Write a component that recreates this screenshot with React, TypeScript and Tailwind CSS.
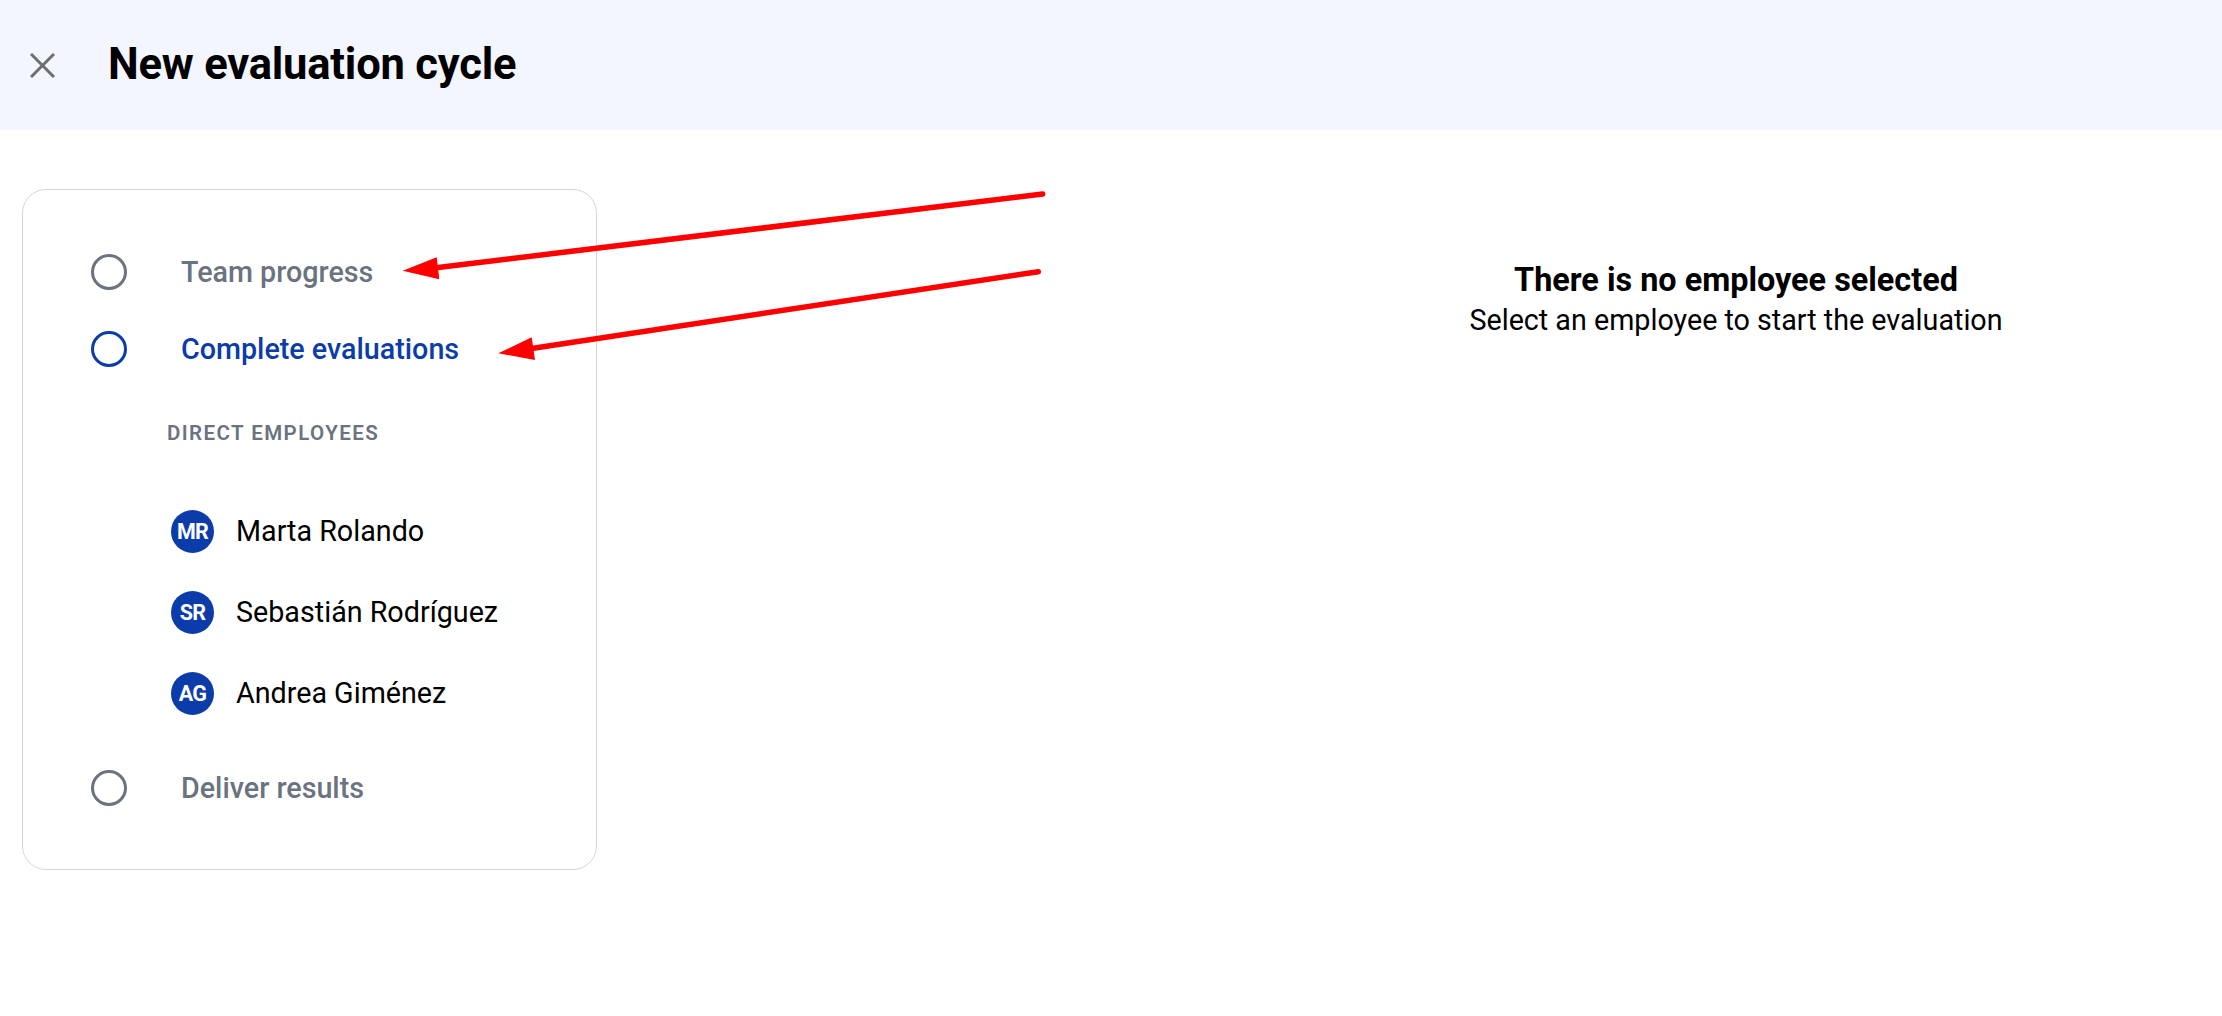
import React from 'react';

type Step = { id: string; label: string; active?: boolean };

const EMPLOYEES = [
  { initials: 'MR', name: 'Marta Rolando' },
  { initials: 'SR', name: 'Sebastián Rodríguez' },
  { initials: 'AG', name: 'Andrea Giménez' },
];

function StepRow({ step }: { step: Step }) {
  const color = step.active ? 'text-[#0b3caa] border-[#0b3caa]' : 'text-[#6b7280] border-[#6b7280]';
  return (
    <div className={`flex items-center h-[36px] gap-[54px] ${color}`}>
      <span className="w-[36px] h-[36px] rounded-full border-[3px] border-current shrink-0" />
      <span className="text-[28.7px] font-medium leading-none">{step.label}</span>
    </div>
  );
}

function Avatar({ initials }: { initials: string }) {
  return (
    <div className="w-[43px] h-[43px] rounded-full bg-[#0b3caa] flex items-center justify-center shrink-0">
      <span className="text-white text-[21.5px] font-bold leading-none tracking-[-0.8px]">{initials}</span>
    </div>
  );
}

export default function App() {
  return (
    <div className="relative min-h-[1016px] w-full bg-white font-['Roboto',sans-serif] text-black">
      {/* Header */}
      <header className="h-[130px] bg-[#f3f6fe] flex items-center pl-[30px] gap-[53px]">
        <button aria-label="Close" className="w-[25px] h-[25px] flex items-center justify-center text-[#6e6e6e]">
          <svg width="25" height="25" viewBox="0 0 25 25" fill="none" stroke="currentColor" strokeWidth="3">
            <line x1="1" y1="1" x2="24" y2="24" />
            <line x1="24" y1="1" x2="1" y2="24" />
          </svg>
        </button>
        <h1 className="text-[43.5px] font-bold leading-none tracking-[-0.2px]">New evaluation cycle</h1>
      </header>

      <main className="flex items-start">
        {/* Steps card */}
        <section className="ml-[22px] mt-[59px] w-[575px] h-[681px] rounded-[24px] border border-[#d6d7db] pt-[64px] pl-[68px]">
          <StepRow step={{ id: 'progress', label: 'Team progress' }} />
          <div className="mt-[41px]">
            <StepRow step={{ id: 'complete', label: 'Complete evaluations', active: true }} />
          </div>

          <div className="mt-[55px] pl-[76px]">
            <div className="h-[22px] flex items-center text-[20.5px] font-semibold text-[#6b7280] tracking-[0.07em] uppercase">
              Direct employees
            </div>
            <ul className="mt-[66px] pl-[4px] flex flex-col gap-[38px]">
              {EMPLOYEES.map(e => (
                <li key={e.initials} className="flex items-center gap-[22px] h-[43px]">
                  <Avatar initials={e.initials} />
                  <span className="text-[28.7px] leading-none">{e.name}</span>
                </li>
              ))}
            </ul>
          </div>

          <div className="mt-[55px]">
            <StepRow step={{ id: 'deliver', label: 'Deliver results' }} />
          </div>
        </section>

        {/* Empty state */}
        <section className="flex-1 pl-[653px] pt-[130px] flex flex-col items-center text-center">
          <p className="text-[32.4px] font-bold leading-[40px]">There is no employee selected</p>
          <p className="text-[28.7px] leading-[40px]">Select an employee to start the evaluation</p>
        </section>
      </main>

      {/* Annotation arrows */}
      <svg className="absolute inset-0 pointer-events-none" width="2222" height="1016" viewBox="0 0 2222 1016">
        <g stroke="#ff0000" strokeWidth="5.5" strokeLinecap="round" fill="none">
          <line x1="1042.7" y1="194" x2="430" y2="268.5" />
          <line x1="1038.3" y1="271.7" x2="525" y2="349.5" />
        </g>
        <g fill="#ff0000">
          <polygon points="402.7,270.7 436.7,257.3 439.3,279.3" />
          <polygon points="498.3,353.3 531.7,337.3 535,360" />
        </g>
      </svg>
    </div>
  );
}
